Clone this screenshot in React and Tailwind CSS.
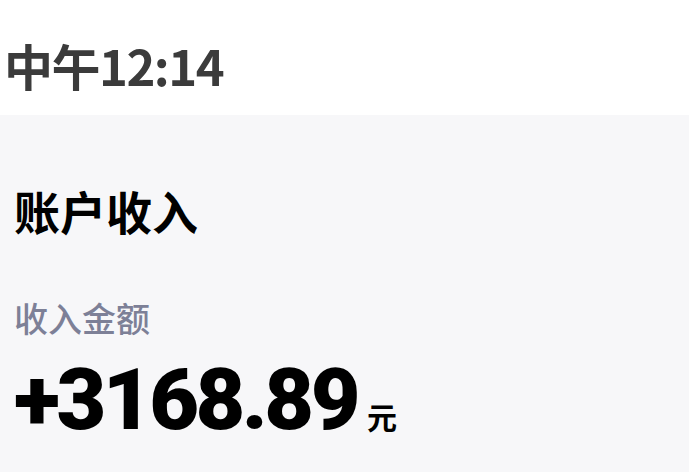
const App = () => {
  return (
    <div className="w-[689px] h-[472px] overflow-hidden bg-[#f7f7f9] font-['Noto_Sans_CJK_SC',sans-serif]">
      {/* Status bar */}
      <div className="h-[115px] bg-white flex items-center pl-[4px] pt-[14px]">
        <span className="text-[49px] font-bold text-[#3b3b3b] leading-none tracking-[-1.5px]">
          中午12:14
        </span>
      </div>

      {/* Income card */}
      <div className="px-[14px]">
        <h1 className="mt-[72px] text-[46px] font-bold text-black leading-none">账户收入</h1>
        <p className="mt-[68px] text-[34px] font-medium text-[#7d8097] leading-none">收入金额</p>
        <div className="mt-[22px] flex items-baseline">
          <span className="font-['Roboto',sans-serif] font-black text-[86px] leading-none text-black tracking-[-3.5px]">
            +3168.89
          </span>
          <span className="ml-[10px] text-[30px] font-bold text-black leading-none">元</span>
        </div>
      </div>
    </div>
  );
};

export default App;
